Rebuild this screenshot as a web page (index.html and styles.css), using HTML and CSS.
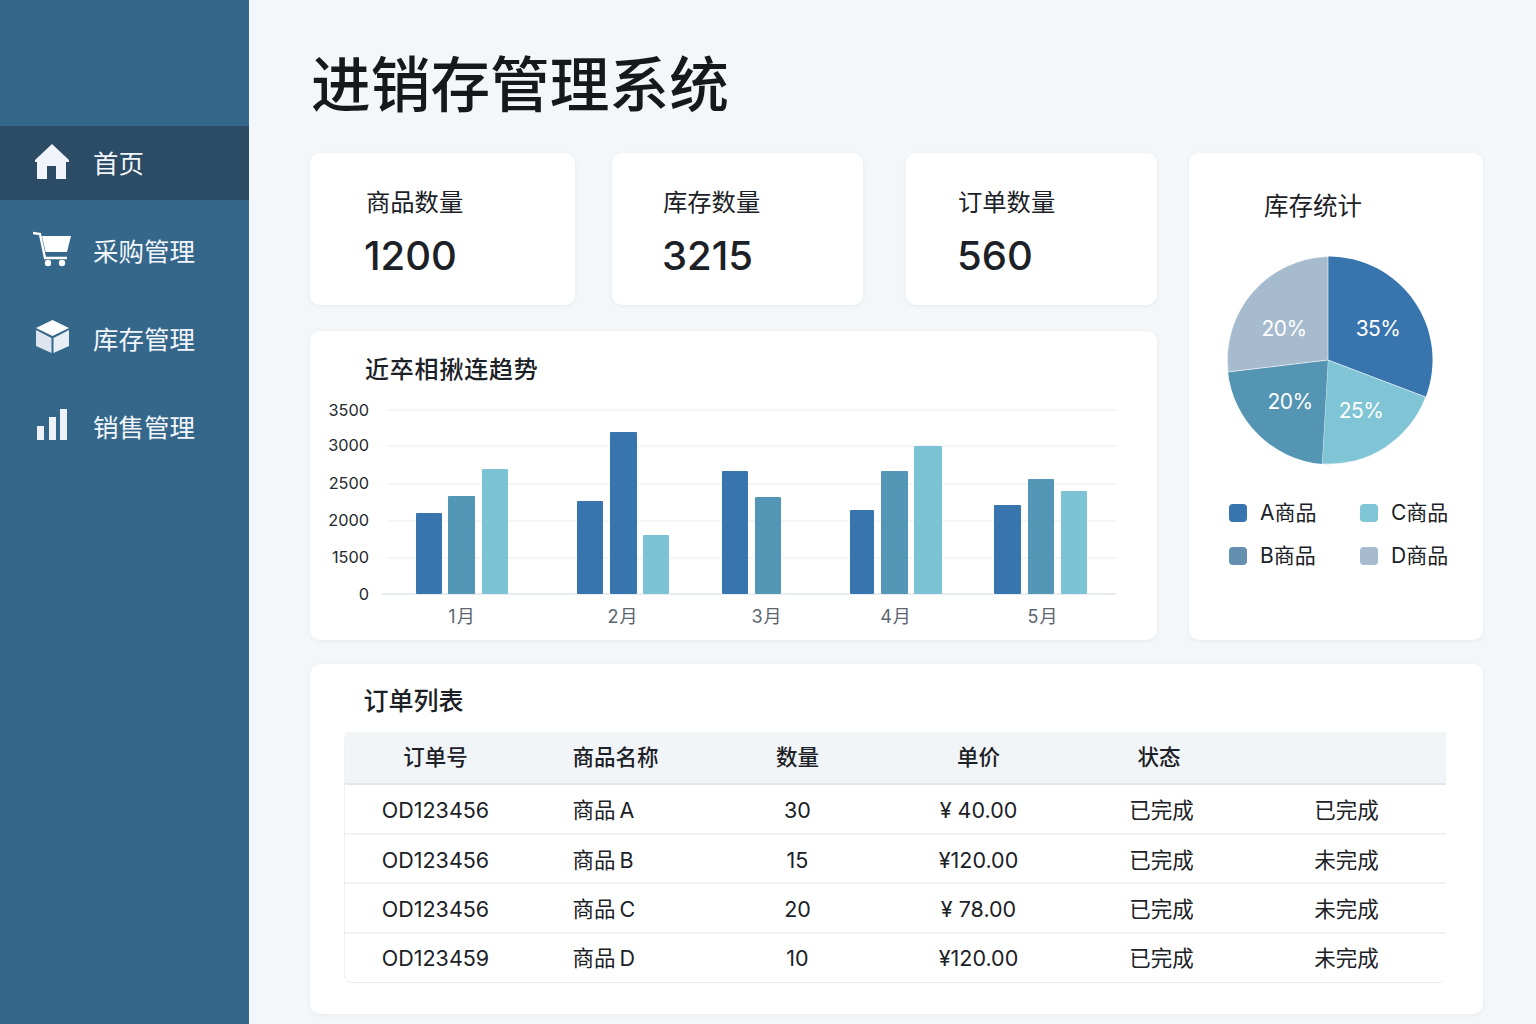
FILE: index.html
```html
<!DOCTYPE html>
<html lang="zh-CN">
<head>
<meta charset="utf-8">
<title>进销存管理系统</title>
<link rel="stylesheet" href="styles.css">
</head>
<body>
<div class="app">
  <aside class="sidebar">
    <nav class="nav">
      <a class="nav-item active">
        <svg class="nav-icon" viewBox="0 0 38 38"><path fill="#f1f4fa" d="M19 2 L36 18 L36 20 L33 20 L33 37 L23 37 L23 24 L14 24 L14 37 L4 37 L4 20 L2 20 L2 18Z"/></svg>
        <span>首页</span>
      </a>
      <a class="nav-item">
        <svg class="nav-icon" viewBox="0 0 38 38"><path fill="#fff" d="M9 6 L38 6 L34 22 L12.5 22Z"/><path fill="none" stroke="#fff" stroke-width="2.4" d="M0 3 L7 4 L12 28 L34 28"/><circle cx="15" cy="33" r="3.2" fill="#fff"/><circle cx="29" cy="33" r="3.2" fill="#fff"/></svg>
        <span>采购管理</span>
      </a>
      <a class="nav-item">
        <svg class="nav-icon" viewBox="0 0 38 38"><path fill="#fff" d="M19.500 2 L36 10 L19.500 18 L3 10Z"/><path fill="#dde6ee" d="M3 12 L18.500 20 L18.500 35 L3 28Z"/><path fill="#e8eef4" d="M36 12 L20.500 20 L20.500 35 L36 28Z"/></svg>
        <span>库存管理</span>
      </a>
      <a class="nav-item">
        <svg class="nav-icon" viewBox="0 0 38 38"><path fill="#eef2f8" d="M4 20h7v14H4z M16 11h7v23h-7z M27 3h7v31h-7z"/></svg>
        <span>销售管理</span>
      </a>
    </nav>
  </aside>

  <main class="main">
    <h1 class="page-title">进销存管理系统</h1>

    <div class="top-grid">
      <div class="left-col">
        <div class="stats">
          <section class="card stat stat-wide">
            <div class="stat-label">商品数量</div>
            <div class="stat-value">1200</div>
          </section>
          <section class="card stat">
            <div class="stat-label">库存数量</div>
            <div class="stat-value">3215</div>
          </section>
          <section class="card stat stat-last">
            <div class="stat-label">订单数量</div>
            <div class="stat-value">560</div>
          </section>
        </div>

        <section class="card chart-card">
          <h2 class="chart-title">近卒相揪连趋势</h2>
          <svg class="chart" viewBox="0 0 847 245">
            <g class="grid-lines">
              <line x1="78" x2="806" y1="15" y2="15"/>
              <line x1="78" x2="806" y1="51" y2="51"/>
              <line x1="78" x2="806" y1="89" y2="89"/>
              <line x1="78" x2="806" y1="126" y2="126"/>
              <line x1="78" x2="806" y1="163" y2="163"/>
            </g>
            <line class="axis" x1="72" x2="806" y1="199" y2="199"/>
            <g class="y-labels">
              <text x="59" y="21">3500</text>
              <text x="59" y="56">3000</text>
              <text x="59" y="94">2500</text>
              <text x="59" y="131">2000</text>
              <text x="59" y="168">1500</text>
              <text x="59" y="205">0</text>
            </g>
            <g class="bars">
              <rect class="s1" x="106" y="118" width="26" height="81" rx="1"/>
              <rect class="s2" x="138" y="101" width="27" height="98" rx="1"/>
              <rect class="s3" x="172" y="74" width="26" height="125" rx="1"/>
              <rect class="s1" x="267" y="106" width="26" height="93" rx="1"/>
              <rect class="s1" x="300" y="37" width="27" height="162" rx="1"/>
              <rect class="s3" x="333" y="140" width="26" height="59" rx="1"/>
              <rect class="s1" x="412" y="76" width="26" height="123" rx="1"/>
              <rect class="s2" x="445" y="102" width="26" height="97" rx="1"/>
              <rect class="s1" x="540" y="115" width="24" height="84" rx="1"/>
              <rect class="s2" x="571" y="76" width="27" height="123" rx="1"/>
              <rect class="s3" x="604" y="51" width="28" height="148" rx="1"/>
              <rect class="s1" x="684" y="110" width="27" height="89" rx="1"/>
              <rect class="s2" x="718" y="84" width="26" height="115" rx="1"/>
              <rect class="s3" x="751" y="96" width="26" height="103" rx="1"/>
            </g>
            <g class="x-labels">
              <text x="152" y="228">1月</text>
              <text x="313" y="228">2月</text>
              <text x="457" y="228">3月</text>
              <text x="586" y="228">4月</text>
              <text x="733" y="228">5月</text>
            </g>
          </svg>
        </section>
      </div>

      <section class="card pie-card">
        <h2 class="pie-title">库存统计</h2>
        <svg class="pie" viewBox="0 0 294 220">
          <path class="p-a" d="M139 110 L139 6.5 A103.500 103.500 0 0 1 236.700 147Z"/>
          <path class="p-c" d="M139 110 L236.700 147 A103.500 103.500 0 0 1 133 214Z"/>
          <path class="p-b" d="M139 110 L133 214 A103.500 103.500 0 0 1 39 122Z"/>
          <path class="p-d" d="M139 110 L39 122 A103.500 103.500 0 0 1 139 6.500Z"/>
          <g class="pie-labels">
            <text x="95" y="86">20%</text>
            <text x="189" y="86">35%</text>
            <text x="101" y="159">20%</text>
            <text x="172" y="168">25%</text>
          </g>
        </svg>
        <ul class="legend">
          <li><i class="swatch sw-a"></i>A商品</li>
          <li><i class="swatch sw-c"></i>C商品</li>
          <li><i class="swatch sw-b"></i>B商品</li>
          <li><i class="swatch sw-d"></i>D商品</li>
        </ul>
      </section>
    </div>

    <section class="card table-card">
      <h2 class="table-title">订单列表</h2>
      <table class="orders">
        <colgroup>
          <col class="c1"><col class="c2"><col class="c3"><col class="c4"><col class="c5"><col class="c6">
        </colgroup>
        <thead>
          <tr><th>订单号</th><th class="name">商品名称</th><th>数量</th><th>单价</th><th class="status-head">状态</th><th></th></tr>
        </thead>
        <tbody>
          <tr><td>OD123456</td><td class="name">商品 A</td><td>30</td><td>¥ 40.00</td><td class="cjk">已完成</td><td class="cjk last">已完成</td></tr>
          <tr><td>OD123456</td><td class="name">商品 B</td><td>15</td><td>¥120.00</td><td class="cjk">已完成</td><td class="cjk last">未完成</td></tr>
          <tr><td>OD123456</td><td class="name">商品 C</td><td>20</td><td>¥ 78.00</td><td class="cjk">已完成</td><td class="cjk last">未完成</td></tr>
          <tr><td>OD123459</td><td class="name">商品 D</td><td>10</td><td>¥120.00</td><td class="cjk">已完成</td><td class="cjk last">未完成</td></tr>
        </tbody>
      </table>
    </section>
  </main>
</div>
</body>
</html>
```

FILE: styles.css
```css
* { box-sizing: border-box; }
html, body { margin: 0; height: 100%; }
body {
  font-family: Inter, "Noto Sans CJK SC", sans-serif;
  color: #1b2126;
  background: #f4f7f9;
  overflow: hidden;
}
.app { display: flex; height: 1024px; }

.sidebar {
  width: 249px;
  flex: none;
  background: #35678b;
  padding-top: 126px;
}
.nav { display: flex; flex-direction: column; }
.nav-item {
  display: flex;
  align-items: center;
  gap: 22px;
  height: 88px;
  padding: 0 0 4px 33px;
  color: #f2f6fa;
  font-size: 25.500px;
}
.nav-item.active {
  height: 74px;
  margin-bottom: 7px;
  background: #2c4b64;
}
.nav-icon { width: 38px; height: 38px; flex: none; }

.main { width: 1287px; padding: 55px 53px 0 61px; }
.page-title {
  margin: 0 0 38px 1px;
  font-size: 59.700px;
  line-height: 60px;
  font-weight: 500;
  color: #16191c;
}
.top-grid { display: flex; gap: 32px; }
.left-col { width: 847px; display: flex; flex-direction: column; gap: 26px; }
.stats { display: flex; gap: 37px; }
.card {
  background: #fff;
  border-radius: 10px;
  box-shadow: 0 1px 4px rgba(40, 70, 100, .07);
}
.stat {
  width: 251px;
  height: 152px;
  padding: 33px 0 0 51px;
}
.stat-wide { width: 265px; padding-left: 56px; }
.stat-last { margin-left: 6px; padding-left: 52px; }
.stat-label { font-size: 24.300px; line-height: 32px; font-weight: 400; }
.stat-value { font-size: 40px; line-height: 50px; margin-top: 13px; font-weight: 500; margin-left: -1px; }
.stat-wide .stat-value { margin-left: -2px; }

.chart-card { height: 309px; padding-top: 22px; }
.chart-title {
  margin: 0 0 8px 55px;
  font-size: 24px;
  line-height: 34px;
  font-weight: 500;
  letter-spacing: .8px;
}
.chart { display: block; width: 847px; height: 245px; }
.grid-lines line { stroke: #e9edf1; stroke-width: 1; }
.axis { stroke: #cfd9e2; stroke-width: 1; }
.y-labels text { font-size: 16.300px; text-anchor: end; fill: #24292e; }
.x-labels text { font-size: 18px; text-anchor: middle; fill: #5b6670; letter-spacing: 1px; }
.s1 { fill: #3874ae; }
.s2 { fill: #5496b5; }
.s3 { fill: #7cc4d5; }

.pie-card { width: 294px; height: 487px; padding-top: 37px; }
.pie-title {
  margin: 0 0 27px 75px;
  font-size: 24.500px;
  line-height: 33px;
  font-weight: 400;
}
.pie { display: block; width: 294px; height: 220px; }
.p-a { fill: #3874ae; }
.p-b { fill: #5395b3; }
.p-c { fill: #7fc5d5; stroke: #fff; stroke-width: .6; }
.p-d { fill: #a6bbce; stroke: #fff; stroke-width: .6; }
.pie-labels text { font-size: 21px; fill: #fff; text-anchor: middle; letter-spacing: -.6px; }
.legend {
  list-style: none;
  margin: 28px 0 0 40px;
  padding: 0;
  display: grid;
  grid-template-columns: 131px 100px;
  row-gap: 13px;
}
.legend li {
  display: flex;
  align-items: center;
  gap: 13px;
  font-size: 21px;
  line-height: 30px;
}
.swatch { width: 18px; height: 18px; border-radius: 4px; flex: none; }
.sw-a { background: #3874ae; }
.sw-b { background: #6390af; }
.sw-c { background: #7fc5d5; }
.sw-d { background: #a6bbce; }

.table-card {
  height: 350px;
  margin-top: 24px;
  padding: 20px 38px 0 33.500px;
}
.table-title {
  margin: 0 0 14px 20px;
  font-size: 25px;
  line-height: 34px;
  font-weight: 500;
}
.orders {
  width: 1101px;
  border-collapse: separate;
  border-spacing: 0;
  table-layout: fixed;
  font-size: 21.500px;
  border-left: 1px solid #eef1f4;
  border-bottom: 1px solid #e9edf1;
  border-radius: 8px;
}
.c1 { width: 182px; }
.c2 { width: 180px; }
.c3 { width: 182px; }
.c4 { width: 180px; }
.c5 { width: 186px; }
.c6 { width: 191px; }
.orders th {
  height: 53px;
  background: #f2f5f8;
  border-bottom: 2px solid #e3e7eb;
  font-weight: 500;
  font-size: 21.500px;
  text-align: center;
  padding: 0 0 4px;
}
.orders th.status-head { padding-right: 5px; }
.orders td {
  height: 49.500px;
  text-align: center;
  padding: 3px 0 0;
  border-bottom: 2px solid #f0f3f5;
  font-weight: 400;
}
.orders tr:last-child td { border-bottom: 0; height: 48.500px; padding-top: 1px; }
.orders td.cjk, .orders td.name { padding-top: 0; }
.orders tr:last-child td.cjk, .orders tr:last-child td.name { padding-top: 0; padding-bottom: 2px; }
.orders td.name, .orders th.name { text-align: left; padding-left: 46px; }
.orders td.name { word-spacing: -2px; }
.orders .last { padding-right: 7px; }
```
